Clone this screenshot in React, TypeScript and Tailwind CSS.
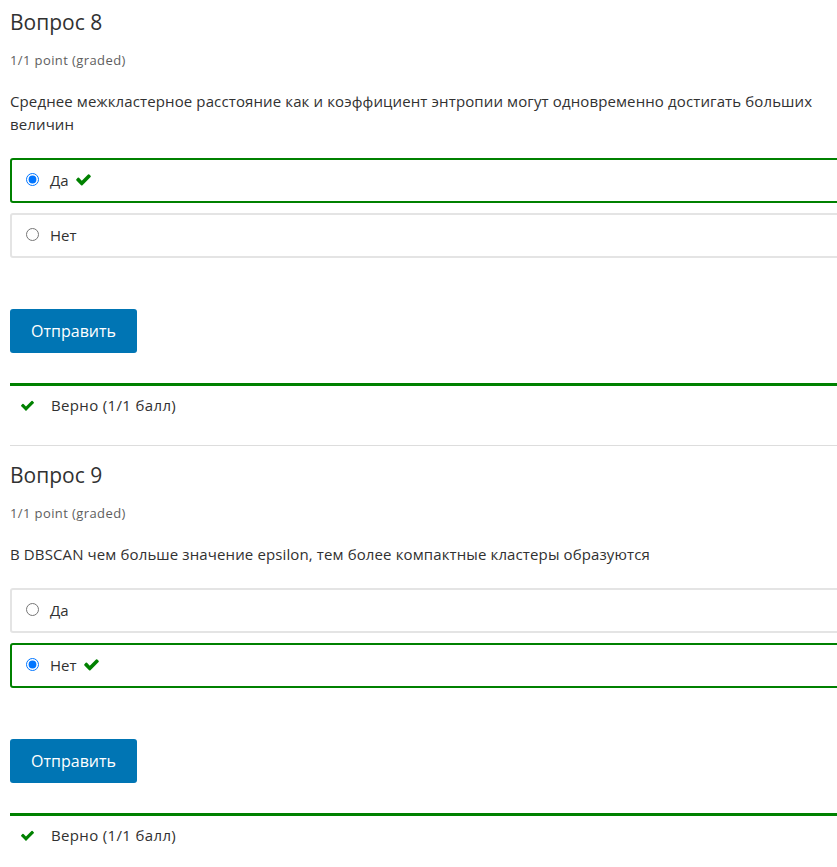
import React from "react";

const CheckIcon = ({ className }: { className?: string }) => (
  <svg viewBox="0 0 1792 1792" className={className} fill="currentColor" aria-hidden="true">
    <path d="M1671 566q0 40-28 68l-724 724-136 136q-28 28-68 28t-68-28l-136-136-362-362q-28-28-28-68t28-68l136-136q28-28 68-28t68 28l294 295 656-657q28-28 68-28t68 28l136 136q28 28 28 68z" />
  </svg>
);

type Opt = { label: string; selected: boolean };

const Option = ({ opt, name }: { opt: Opt; name: string }) => (
  <label
    className={
      "flex h-[45px] items-center rounded-[3px] border-2 pb-[2px] pl-[14px] " +
      (opt.selected ? "border-[#008100]" : "border-[#e4e4e4]")
    }
  >
    <input
      type="radio"
      name={name}
      checked={opt.selected}
      readOnly
      className="m-0 h-[13px] w-[13px] accent-[#0075ff]"
    />
    <span className="ml-[11px] text-[15px] leading-[20px] text-[#313131]">{opt.label}</span>
    {opt.selected && <CheckIcon className="ml-[6px] h-[17px] w-[17px] text-[#008100]" />}
  </label>
);

const Question = ({
  title,
  text,
  options,
  name,
  topPad,
}: {
  title: string;
  text: string;
  options: Opt[];
  name: string;
  topPad: string;
}) => (
  <div className={topPad}>
    <h3 className="text-[21px] font-normal leading-[25px] text-[#313131]">{title}</h3>
    <div className="mt-4 text-[13px] leading-[18px] tracking-[0.4px] text-[#5e5e5e]">
      1/1 point (graded)
    </div>
    <p className="mt-[21px] text-[15px] leading-[23px] tracking-[0.12px] text-[#313131]">{text}</p>
    <div className="mt-[22px] flex flex-col gap-[10px]">
      {options.map((o) => (
        <Option key={o.label} opt={o} name={name} />
      ))}
    </div>
    <button className="mt-[51px] h-[44px] w-[127px] rounded-[3px] bg-[#0075b4] text-[16px] text-white">
      Отправить
    </button>
    <div className="mt-[30px] h-[3px] bg-[#008100]" />
    <div className="flex items-center pt-[9px]">
      <CheckIcon className="ml-[10px] h-[15px] w-[15px] text-[#008100]" />
      <span className="ml-[16px] text-[15px] leading-[20px] tracking-[0.35px] text-[#313131]">
        Верно (1/1 балл)
      </span>
    </div>
  </div>
);

export default function App() {
  return (
    <div
      className="w-full overflow-hidden bg-white"
      style={{ fontFamily: '"Open Sans", "Noto Sans", sans-serif' }}
    >
      <div className="ml-[10px] w-[850px] pb-10">
        <Question
          topPad="pt-[10px]"
          name="q8"
          title="Вопрос 8"
          text="Среднее межкластерное расстояние как и коэффициент энтропии могут одновременно достигать больших величин"
          options={[
            { label: "Да", selected: true },
            { label: "Нет", selected: false },
          ]}
        />
        <div className="mt-[30px] h-px bg-[#dddddd]" />
        <Question
          topPad="pt-[17px]"
          name="q9"
          title="Вопрос 9"
          text="В DBSCAN чем больше значение epsilon, тем более компактные кластеры образуются"
          options={[
            { label: "Да", selected: false },
            { label: "Нет", selected: true },
          ]}
        />
      </div>
    </div>
  );
}
